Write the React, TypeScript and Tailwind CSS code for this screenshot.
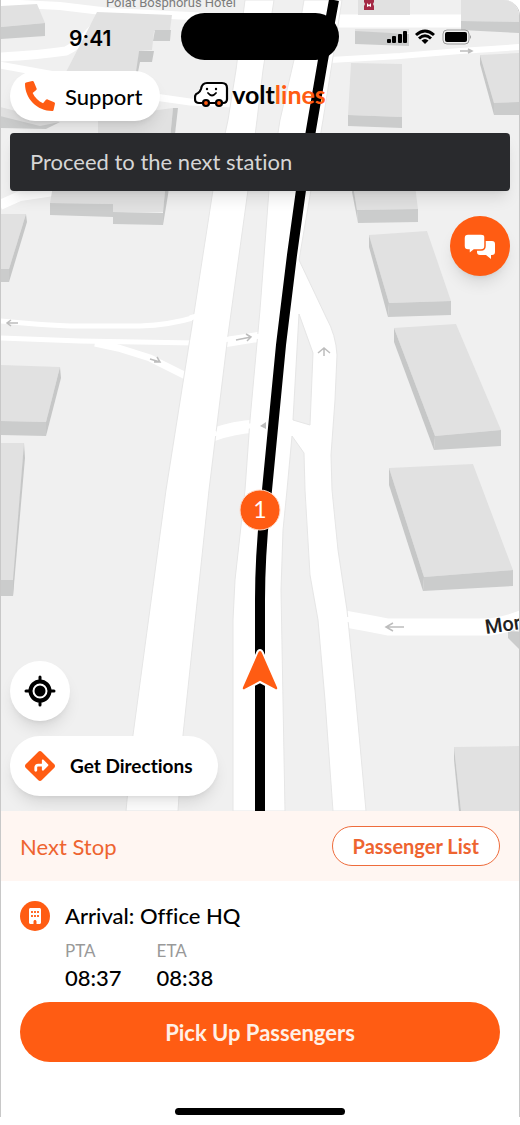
import React from "react";
import { FaPhone } from "react-icons/fa";
import { FaBuilding, FaDiamondTurnRight } from "react-icons/fa6";

interface BuildingShape {
  roof: string;
  front?: string;
  side?: string;
}

const BUILDINGS: BuildingShape[] = [
  { roof: "0,6 37,4 45,23 0,27", front: "0,27 45,23 45,36 0,39" },
  {
    roof: "97,12 172,15 170,30 154,31 152,50 139,51 137,72 66,72",
    front: "155,30 171,30 170,41 153,41",
    side: "139,51 154,51 152,62 140,62 138,72 136,72",
  },
  {
    roof: "98,118 173,108 163,212 113,212 113,204 50,203 54,180 98,180",
    front: "50,203 113,204 113,212 163,213 163,225 113,224 113,217 50,215",
    side: "173,108 178,108 168,195 163,225 163,212",
  },
  { roof: "0,107 20,112 60,122 45,128 0,120", front: "0,116 40,126 60,122 46,129 0,128" },
  { roof: "0,214 26,214 9,269 0,269", front: "0,269 9,269 9,282 0,282", side: "26,214 27,222 9,282 9,269" },
  { roof: "0,365 60,367 46,422 0,421", front: "0,421 46,422 46,436 0,435", side: "60,367 61,378 46,436 46,422" },
  { roof: "0,443 24,443 14,580 0,580", front: "0,580 14,580 13,596 0,596", side: "24,443 25,458 13,596 13,580" },
  { roof: "358,0 410,0 410,15 358,15" },
  { roof: "461,0 520,0 520,22 461,21", front: "461,21 520,22 520,33 461,30" },
  { roof: "355,29 409,29 409,33 355,33", front: "355,31 409,34 409,46 355,44" },
  { roof: "351,63 402,64 402,117 348,115", front: "348,115 402,117 402,128 348,126" },
  { roof: "480,55 520,53 520,103 494,103", front: "494,103 520,102 520,115 494,115", side: "480,55 494,103 494,115 480,64" },
  { roof: "353,185 415,185 418,209 357,210", front: "357,210 418,209 418,222 358,223", side: "353,185 357,210 358,223 352,192" },
  { roof: "369,235 427,231 451,301 389,303", front: "389,303 451,301 451,315 388,317", side: "369,235 389,303 388,317 369,247" },
  { roof: "394,328 456,324 501,430 435,436", front: "435,436 501,430 501,446 434,450", side: "394,328 435,436 434,450 394,342" },
  { roof: "389,468 473,464 513,570 424,577", front: "424,577 513,570 513,586 423,591", side: "389,468 424,577 423,591 389,485" },
  { roof: "508,631 520,629 520,642", front: "508,631 520,632 520,650 508,638" },
  { roof: "454,747 520,746 520,811 461,811", side: "454,747 461,811 459,811 454,760" },
];

const STREETS = [
  { d: "M0 3 L60 6 L110 12 L230 18", width: 8 },
  { d: "M107 10 Q88 40 66 51 Q40 55 0 57", width: 9 },
  { d: "M0 65 L60 76 L155 97 L190 102 L232 104", width: 7 },
  { d: "M330 21 L461 21", width: 13 },
  { d: "M330 60 L400 56 L460 51 L520 47", width: 6 },
  { d: "M0 205 L20 196 L60 190", width: 10 },
  { d: "M0 321 Q40 325 70 326 L140 326 Q170 325 196 317", width: 5 },
  { d: "M0 338 L80 341 L195 343", width: 5 },
  { d: "M220 343 L264 336", width: 10 },
  { d: "M95 343 L118 348 L150 358 L190 378", width: 7 },
  { d: "M212 435 Q235 427 256 426", width: 13 },
  { d: "M345 619 Q368 623 388 627 L490 627 Q506 625 524 618", width: 17 },
];

const ROADS = [
  "M245 0 L236 70 L228 120 L213 190 L194 313 L166 490 L133 735 L126 811 L178 811 L183 735 L209 490 L228 335 L248 190 L257 120 L263 70 L274 0 Z",
  "M304 0 L294 60 L280 120 L269 190 L260 310 L250 420 L245 490 L235 580 L233 620 L233 811 L285 811 L281 590 L283 530 L287 490 L292 436 L304 453 L305 490 L310 575 L318 620 L325 700 L333 811 L366 811 L355 690 L347 610 L338 550 L332 490 L331 455 L335 400 L337 355 Q336 335 326 317 L299 260 L323 120 L342 0 Z",
];

const ARROWS = [
  "M18 323 H7 m4 -3 l-4 3 l4 3",
  "M236 340 L251 337 m-5 -3 l5 3 l-4 4",
  "M150 359 L160 362 m-3 -5 l3 5 l-6 0",
  "M324 356 V348 m-6 5 l6 -5 l6 5",
  "M404 627 H386 m7 -4 l-7 4 l7 4",
  "M460 51 H472 m-4 -2 l4 2 l-4 2",
];

const CityMap: React.FC = () => (
  <svg
    className="absolute inset-0 h-full w-full"
    viewBox="0 0 520 811"
    preserveAspectRatio="xMidYMax slice"
    aria-label="Map of the route"
    role="img"
  >
    <rect width="520" height="811" fill="#f0f0f0" />
    {STREETS.map((street) => (
      <path key={street.d} d={street.d} fill="none" stroke="#fff" strokeWidth={street.width} />
    ))}
    {ROADS.map((d) => (
      <path key={d} d={d} fill="#fff" stroke="#e6e6e6" strokeWidth="1" />
    ))}
    <path d="M299 314 L313 353 L310 425 L293 420 Z" fill="#f0f0f0" stroke="#e6e6e6" />
    {/* junctions drawn again so the road edges stay open */}
    <path
      d="M190 318 L200 315 M190 343 L262 336 M186 376 L195 381 M208 436 L217 433 M248 426 L258 426 M344 619 L358 621"
      stroke="#fff"
      strokeWidth="5"
    />
    {BUILDINGS.map((b) => (
      <g key={b.roof}>
        <polygon points={b.roof} fill="#e1e1e1" />
        {b.front && <polygon points={b.front} fill="#cbcccc" />}
        {b.side && <polygon points={b.side} fill="#c6c7c7" />}
      </g>
    ))}
    {ARROWS.map((d) => (
      <path key={d} d={d} fill="none" stroke="#bdbdbd" strokeWidth="1.5" />
    ))}
    <path d="M260 426 l6 -4 v7 z" fill="#bdbdbd" />

    <g fontFamily="Roboto, sans-serif">
      <text x="106" y="7" fontSize="13" fill="#7c7c7c">
        Polat Bosphorus Hotel
      </text>
      <text x="486" y="634" fontSize="20" fontWeight="500" fill="#222" stroke="#fff" strokeWidth="2" paintOrder="stroke" transform="rotate(-8 486 634)">
        Mor
      </text>
    </g>
    <g fill="#a52a46">
      <path d="M364 0 h10 v2 l-1 2 l1 2 v4 h-10 v-4 l1 -2 l-1 -2 z" />
      <path d="M367 3 l2 2 l2 -2 v4 l-2 -1 l-2 1 z" fill="#fff" />
    </g>

    <path
      d="M334 0 L323 60 L311 130 L301 190 L292 255 L281 345 L267 490 Q260 550 260 600 L260 811"
      fill="none"
      stroke="#000"
      strokeWidth="10"
    />
    <path
      d="M260 650 Q262 650 263 653 L278 687 Q279 691 275 690 L260 682 L245 690 Q241 691 242 687 L257 653 Q258 650 260 650 Z"
      fill="#ff5c13"
      stroke="#fff"
      strokeWidth="2"
    />
    <circle cx="260" cy="510" r="20" fill="#ff5c13" stroke="#ffd9c7" strokeWidth="1" />
    <text x="260" y="518" textAnchor="middle" fontFamily="Lato, sans-serif" fontSize="23" fill="#fff">
      1
    </text>
  </svg>
);

const SignalIcons: React.FC = () => (
  <svg className="h-5 w-[86px]" viewBox="0 0 86 20" aria-hidden="true">
    <rect x="1" y="12" width="4" height="4" rx="1" />
    <rect x="6" y="9" width="4" height="7" rx="1" />
    <rect x="12" y="7" width="4" height="9" rx="1" />
    <rect x="17" y="4" width="4" height="12" rx="1" />
    <g fill="none" stroke="#000" strokeWidth="3">
      <path d="M30 8 Q39 0 48 8" />
      <path d="M33 11.500 Q39 6 45 11.500" />
    </g>
    <path d="M35.500 13.500 Q39 10.500 42.500 13.500 L39 17 Z" />
    <rect x="57" y="3" width="26" height="14" rx="4" fill="none" stroke="#9a9a9a" />
    <rect x="59" y="5" width="22" height="10" rx="2" />
    <path d="M84 8 Q86 10 84 12 Z" fill="#9a9a9a" />
  </svg>
);

const Logo: React.FC = () => (
  <div className="flex items-center gap-[3px] pb-[5px]" aria-label="voltlines">
    <svg className="h-7 w-[35px]" viewBox="0 0 35 28" fill="none" stroke="#000" strokeWidth="2.200" strokeLinecap="round" aria-hidden="true">
      <path
        d="M7 23 H5 Q1 23 1 19 V17 Q1 14 4 13 Q6 12 7 9 Q8 3 13 3 H28 Q33 3 33 8 V19 Q33 23 29 23 Z"
        fill="#fff"
      />
      <path d="M14 13 Q18 18 22 13" strokeWidth="1.800" />
      <circle cx="13" cy="9" r="1.200" fill="#000" stroke="none" />
      <circle cx="22" cy="9" r="1.200" fill="#000" stroke="none" />
      <circle cx="12" cy="23" r="3" fill="#ff5c13" />
      <circle cx="25" cy="23" r="3" fill="#ff5c13" />
    </svg>
    <span className="text-[25px] leading-7 font-bold text-black">
      volt<span className="text-[#ff5c13]">lines</span>
    </span>
  </div>
);

const ChatIcon: React.FC = () => (
  <svg className="h-8 w-8" viewBox="0 0 32 32" fill="#fff" aria-hidden="true">
    <path d="M15 11 H28 Q31 11 31 14 V22 Q31 25 28 25 H27 V29 L22 25 H16 Q13 25 13 22 V19 Z" />
    <path
      d="M4 4 H17 Q21 4 21 7 V16 Q21 20 17 20 H10 L5 24 V20 H4 Q0 20 0 16 V8 Q0 4 4 4 Z"
      stroke="#ff5c13"
      strokeWidth="1.500"
    />
  </svg>
);

const LocateIcon: React.FC = () => (
  <svg className="h-8 w-8" viewBox="0 0 32 32" fill="none" stroke="#000" strokeLinecap="round" aria-hidden="true">
    <circle cx="16" cy="16" r="9.500" strokeWidth="4" />
    <circle cx="16" cy="16" r="5.500" fill="#000" stroke="none" />
    <path d="M16 2 V6 M16 26 V30 M2 16 H6 M26 16 H30" strokeWidth="3" />
  </svg>
);

const StopTime: React.FC<{ label: string; time: string }> = ({ label, time }) => (
  <div>
    <dt className="text-[17px] leading-6 text-[#999]">{label}</dt>
    <dd className="text-[22px] leading-[30px] font-medium">{time}</dd>
  </div>
);

const App: React.FC = () => {
  return (
    <div className="flex min-h-screen flex-col bg-white pb-2 font-[Lato,'Noto_Sans',sans-serif] text-black [font-variant-ligatures:none]">
      <main className="flex flex-1 flex-col overflow-hidden rounded-tr-2xl border-x border-[#c8c8c8]">
        <section className="relative isolate flex flex-1 flex-col overflow-hidden px-[9px] pt-[13px] pb-[15px]">
          <div className="absolute inset-0 -z-10">
            <CityMap />
          </div>

          <div className="grid grid-cols-[1fr_auto_1fr] items-center">
            <time className="pt-1 pl-[59px] font-[Inter,sans-serif] text-[21px] leading-7 font-semibold">9:41</time>
            <div className="h-[47px] w-[158px] rounded-full bg-black" />
            <div className="flex justify-end pr-[38px]">
              <SignalIcons />
            </div>
          </div>

          <header className="mt-[11px] grid grid-cols-[1fr_auto_1fr] items-center">
            <button className="flex h-[50px] w-[150px] items-center gap-[10px] rounded-full bg-white pl-[15px] text-[22px] font-medium shadow-lg">
              <FaPhone className="h-[30px] w-[30px] -scale-x-100 text-[#ff5c13]" aria-hidden="true" />
              Support
            </button>
            <Logo />
          </header>

          <p className="mt-3 rounded bg-[#292a2d] px-5 py-[14px] text-[22px] leading-[30px] text-[#d6d6d6] shadow-lg">
            Proceed to the next station
          </p>

          <button
            className="mt-[25px] flex h-[60px] w-[60px] items-center justify-center self-end rounded-full bg-[#ff5c13] shadow-lg"
            aria-label="Open chat"
          >
            <ChatIcon />
          </button>

          <div className="mt-auto flex flex-col items-start gap-[15px]">
            <button
              className="flex h-[60px] w-[60px] items-center justify-center rounded-full bg-white shadow-lg"
              aria-label="Show my location"
            >
              <LocateIcon />
            </button>
            <button className="flex h-[60px] items-center gap-[15px] rounded-full bg-white pr-[25px] pl-[15px] text-[19px] font-bold shadow-lg">
              <FaDiamondTurnRight className="h-[30px] w-[30px] text-[#ff5c13]" aria-hidden="true" />
              Get Directions
            </button>
          </div>
        </section>

        <section>
          <div className="flex h-[70px] items-center justify-between bg-[#fff6f2] px-[19px]">
            <h2 className="text-[22px] text-[#ee6430]">Next Stop</h2>
            <button className="h-10 rounded-full border border-[#ee6c3c] bg-white px-5 text-[20px] font-bold text-[#ee6430]">
              Passenger List
            </button>
          </div>

          <div className="px-[19px] pt-5">
            <div className="flex items-center gap-[15px]">
              <span className="flex h-[30px] w-[30px] items-center justify-center rounded-full bg-[#ff5c13]">
                <FaBuilding className="h-4 w-4 text-white" aria-hidden="true" />
              </span>
              <h3 className="text-[22px] leading-[30px] font-medium">Arrival: Office HQ</h3>
            </div>
            <dl className="mt-2 mb-[9px] flex gap-[35px] pl-[45px]">
              <StopTime label="PTA" time="08:37" />
              <StopTime label="ETA" time="08:38" />
            </dl>
            <button className="h-[60px] w-full rounded-full bg-[#ff5c13] text-[22px] font-bold text-[#fff0e6]">
              Pick Up Passengers
            </button>
          </div>

          <div className="mx-auto mt-[46px] mb-[2px] h-[7px] w-[170px] rounded-full bg-black" />
        </section>
      </main>
    </div>
  );
};

export default App;
